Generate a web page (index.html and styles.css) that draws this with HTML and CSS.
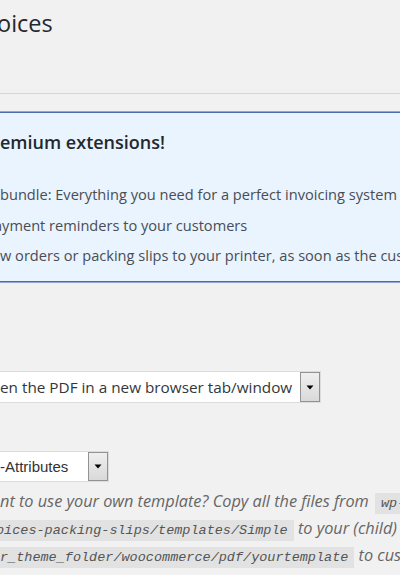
FILE: index.html
```html
<!DOCTYPE html>
<html>
<head>
<meta charset="utf-8">
<link rel="stylesheet" href="styles.css">
</head>
<body>
<div class="wrap">
  <h1 class="title">oices</h1>
  <hr class="sep">
  <div class="notice">
    <h3 class="notice-title">emium extensions!</h3>
    <ul class="notice-list">
      <li>bundle: Everything you need for a perfect invoicing system</li>
      <li><span class="cut">a</span>yment reminders to your customers</li>
      <li>w orders or packing slips to your printer, as soon as the customer orders</li>
    </ul>
  </div>
  <div class="field field-display">
    <div class="select select-wide">
      <span class="select-text">en the PDF in a new browser tab/window</span>
      <span class="select-btn"><svg width="8" height="5" viewBox="0 0 8 5"><path d="M0.5 0.5h7l-3.5 4z" fill="#000"/></svg></span>
    </div>
  </div>
  <div class="field field-template">
    <div class="select select-narrow">
      <span class="select-text arial">-Attributes</span>
      <span class="select-btn"><svg width="8" height="5" viewBox="0 0 8 5"><path d="M0.5 0.5h7l-3.5 4z" fill="#000"/></svg></span>
    </div>
  </div>
  <p class="desc">nt to use your own template? Copy all the files from <code class="code code-first">wp-content/plugins/woocommerce-pdf-invoices</code><br><code class="code code-cont">oices-packing-slips/templates/Simple</code> to your (child) theme in <code class="code">wp-content/themes/</code><br><code class="code code-cont code-flush">r_theme_folder/woocommerce/pdf/yourtemplate</code> to customize them</p>
</div>
</body>
</html>
```
FILE: styles.css
```css
html, body {
  margin: 0;
  padding: 0;
  background: #f1f1f1;
  overflow: hidden;
}
body {
  width: 400px;
  height: 575px;
  font-family: "Open Sans", "Noto Sans", sans-serif;
  color: #444;
}
.wrap {
  white-space: nowrap;
  overflow: hidden;
}
.title {
  margin: 0;
  padding-top: 9px;
  margin-left: -3px;
  font-size: 23.5px;
  line-height: 29px;
  font-weight: 400;
  color: #23282d;
}
.sep {
  margin: 55px 0 0 0;
  border: 0;
  border-top: 1px solid #d6d6d6;
  height: 0;
}
.notice {
  margin-top: 17px;
  background: #eaf4fe;
  border-top: 1px solid #93a7cf;
  border-bottom: 1px solid #93a7cf;
  box-shadow: inset 0 1px 0 #4d6eae, inset 0 -1px 0 #4d6eae;
  padding: 19px 0 17px 0;
}
.notice-title {
  margin: 0;
  font-size: 18px;
  line-height: 22px;
  font-weight: 600;
  color: #23282d;
}
.notice-list {
  list-style: none;
  margin: 31px 0 0 0;
  padding: 0;
}
.notice-list li {
  font-size: 14.6px;
  line-height: 20px;
  margin-bottom: 10.5px;
  color: #484d55;
}
.notice-list li:last-child {
  margin-bottom: 0;
}
.cut {
  display: inline-block;
  margin-left: -6px;
}
.field-display {
  margin-top: 88px;
}
.field-template {
  margin-top: 48px;
}
.select {
  display: flex;
  align-items: stretch;
  background: #fff;
  border: 1px solid #dcdcdc;
  border-left: 0;
  box-sizing: border-box;
}
.select-wide {
  width: 321px;
  height: 32px;
}
.select-narrow {
  width: 109px;
  height: 31px;
}
.select-text {
  flex: 1;
  display: flex;
  align-items: center;
  font-size: 15.3px;
  color: #32373c;
  overflow: hidden;
}
.select-text.arial {
  font-family: "Liberation Sans", Arial, sans-serif;
  font-size: 15px;
  color: #333;
}
.select-btn {
  width: 20px;
  box-sizing: border-box;
  border: 1px solid #929292;
  background: linear-gradient(#efefef, #d9d9d9);
  display: flex;
  align-items: center;
  justify-content: center;
}
.desc {
  margin: 7px 0 0 0;
  font-size: 16.3px;
  line-height: 25px;
  font-style: italic;
  color: #666;
}
.code {
  font-family: "Liberation Mono", "DejaVu Sans Mono", monospace;
  font-size: 13.5px;
  font-style: italic;
  background: #e2e2e2;
  padding: 3px 6px;
  color: #555;
}
.code-first {
  margin-left: 2px;
}
.code-cont {
  padding-left: 0;
  margin-left: -4px;
}
.code-flush {
  margin-left: 0;
}
```
